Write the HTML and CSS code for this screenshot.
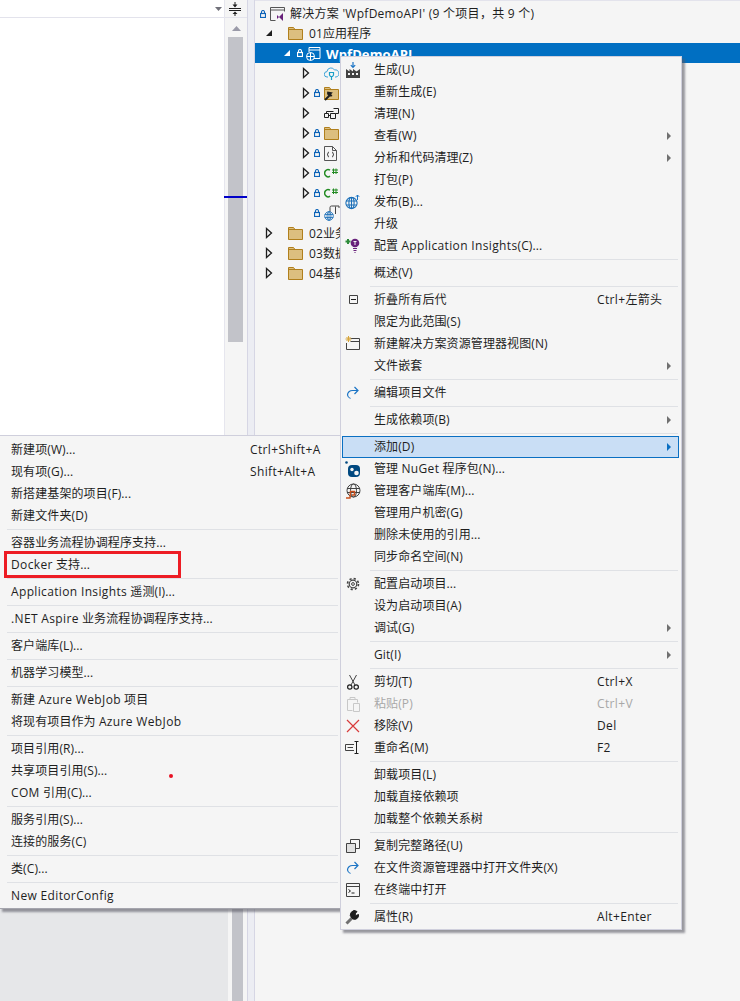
FILE: index.html
```html
<!DOCTYPE html>
<html lang="zh-CN">
<head>
<meta charset="utf-8">
<title>WpfDemoAPI</title>
<link rel="stylesheet" href="styles.css">
</head>
<body>
<svg class="defs" width="0" height="0" aria-hidden="true">
  <symbol id="lock" viewBox="0 0 6 8"><path d="M1.500 3.500V2a1.500 1.500 0 0 1 3 0v1.500" fill="none" stroke="currentColor" stroke-width="1.100"/><rect x=".5" y="3.500" width="5" height="4" fill="none" stroke="currentColor" stroke-width="1.200"/></symbol>
  <symbol id="open" viewBox="0 0 8 12"><path d="M1.500 1.500 6.500 6l-5 4.500z" fill="none" stroke="#1e1e1e" stroke-width="1.300"/></symbol>
  <symbol id="down" viewBox="0 0 8 8"><path d="M7 1v6H1z" fill="#1e1e1e"/></symbol>
  <symbol id="folder" viewBox="0 0 15 13"><path d="M.5 12.500V.5h5l1.500 2h7.500v10z" fill="#dcbf7f" stroke="#b07f1c"/><path d="M.5 2.500H7" fill="none" stroke="#b07f1c"/></symbol>
  <symbol id="globe" viewBox="0 0 12 12"><g fill="none" stroke="#1b6fb8" stroke-width="1"><circle cx="6" cy="6" r="5.200"/><ellipse cx="6" cy="6" rx="2.400" ry="5.200"/><path d="M1 4.200h10M1 7.800h10M6 .8v10.400"/></g></symbol>
  <symbol id="cs" viewBox="0 0 14 10"><path d="M6 2.200A3.400 3.600 0 1 0 6 8.200" fill="none" stroke="#228b22" stroke-width="1.500"/><path d="M9.500 .5V6M12 .5V6M8 2h6M8 4.500h6" fill="none" stroke="#228b22" stroke-width="1"/></symbol>
  <symbol id="redo" viewBox="0 0 16 16"><path d="M12.500 5.500H7.500a5 4.500 0 0 0-5 4.500 4.500 4.500 0 0 0 3 3.500" fill="none" stroke="#1b74c5" stroke-width="1.200"/><path d="M9.500 2l3.500 3.500L9.500 9" fill="none" stroke="#1b74c5" stroke-width="1.200"/></symbol>
</svg>

<div class="workspace">
  <section class="editor">
    <div class="editor-top"><svg class="dropdown" width="7" height="4" viewBox="0 0 7 4"><path d="M0 0h7L3.500 4z" fill="#71717a"/></svg></div>
    <div class="editor-body"></div>
    <div class="editor-empty"></div>
  </section>

  <div class="scroll">
    <div class="splitter"><svg width="12" height="14" viewBox="0 0 12 14"><path d="M0 6.500h12M0 8.500h12" stroke="#1e1e1e" fill="none"/><path d="M6 0v3M6 11v3" stroke="#1e1e1e" fill="none"/><path d="M3.500 2.500h5L6 5.500zM3.500 12h5L6 9.500z" fill="#1e1e1e"/></svg></div>
    <div class="scroll-up"><svg width="9" height="5" viewBox="0 0 9 5"><path d="M0 5h9L4.500 0z" fill="#9a9aa8"/></svg></div>
    <div class="thumb"></div>
    <div class="scroll-rest"></div>
    <div class="scroll-lower"><div class="thumb-lower"></div></div>
    <div class="marker"></div>
  </div>

  <div class="gutter"></div>

  <section class="tree">
    <div class="node l0"><svg class="lock"><use href="#lock"/></svg><svg class="sol" width="16" height="16" viewBox="0 0 16 16"><path d="M.5 14.500V1.500h14v4M.5 4h14M.5 14.500h5" fill="none" stroke="#555"/><path d="M7 9l2 2 4-4v8l-4-4-2 2z" fill="#68217a"/></svg><span class="gap wide">解决方案 'WpfDemoAPI' (9 个项目，共 9 个)</span></div>
    <div class="node l1"><svg class="tw"><use href="#down"/></svg><svg class="fold"><use href="#folder"/></svg><span class="gap">01应用程序</span></div>
    <div class="node l2 sel"><svg class="tw"><use href="#down"/></svg><svg class="lock"><use href="#lock"/></svg><svg class="web" width="15" height="15" viewBox="0 0 15 15"><path d="M3 1.500h11v11H8M3 4h11M3 1.500V6" fill="none" stroke="#fff"/><circle cx="4.500" cy="10.500" r="4" fill="none" stroke="#fff"/><path d="M.5 10.500h8M4.500 6.500v8" stroke="#fff"/></svg><b class="gap">WpfDemoAPI</b></div>
    <div class="node l3"><svg class="chev"><use href="#open"/></svg><span class="nolock"></span><svg width="15" height="14" viewBox="0 0 15 14"><path d="M4 11H3a2.700 2.700 0 0 1 0-5.400A4 4 0 0 1 10.500 4 3.400 3.400 0 0 1 12 11h-1" fill="none" stroke="#3da4d8"/><path d="M5.500 6.500h4V9l-1 1.500H6.500L5.500 9zM7.500 10.500V14" fill="none" stroke="#1ba0c8" stroke-width="1.200"/></svg></div>
    <div class="node l3"><svg class="chev"><use href="#open"/></svg><svg class="lock"><use href="#lock"/></svg><svg width="15" height="15" viewBox="0 0 15 15"><use href="#folder" width="15" height="13" y="1"/><path d="M1 14l5-5M4 6.500a2.500 2.500 0 0 0 3 3L6 8l1-1z" stroke="#1e1e1e" stroke-width="1.800" fill="#1e1e1e"/></svg></div>
    <div class="node l3"><svg class="chev"><use href="#open"/></svg><span class="nolock"></span><svg width="15" height="13" viewBox="0 0 15 13"><path d="M.5 6.500h4v4h-4zM6.500 6.500h5v5h-5zM9.500 1.500h5v5h-3M4.500 8.500h2M2.500 6.500v-2h7" fill="none" stroke="#222"/></svg></div>
    <div class="node l3"><svg class="chev"><use href="#open"/></svg><svg class="lock"><use href="#lock"/></svg><svg class="fold"><use href="#folder"/></svg></div>
    <div class="node l3"><svg class="chev"><use href="#open"/></svg><svg class="lock"><use href="#lock"/></svg><svg width="13" height="15" viewBox="0 0 13 15"><path d="M.5.500h8l4 4v10H.5z" fill="#f5f5f5" stroke="#555"/><path d="M8.500.5v4h4" fill="none" stroke="#555"/><path d="M5 6c-1.500 0-.5 2.500-2 2.500 1.500 0 .5 2.500 2 2.500M8 6c1.500 0 .5 2.500 2 2.500-1.500 0-.5 2.500-2 2.500" fill="none" stroke="#333"/></svg></div>
    <div class="node l3"><svg class="chev"><use href="#open"/></svg><svg class="lock"><use href="#lock"/></svg><svg class="csharp"><use href="#cs"/></svg></div>
    <div class="node l3"><svg class="chev"><use href="#open"/></svg><svg class="lock"><use href="#lock"/></svg><svg class="csharp"><use href="#cs"/></svg></div>
    <div class="node l3"><span class="nochev"></span><svg class="lock"><use href="#lock"/></svg><svg width="16" height="16" viewBox="0 0 16 16"><path d="M6 7V2.500A1.500 1.500 0 0 1 7.500 1H15v2M11.500 1.500V9" fill="none" stroke="#444"/><use href="#globe" width="10" height="10" y="6"/></svg></div>
    <div class="node l1"><svg class="chev"><use href="#open"/></svg><svg class="fold"><use href="#folder"/></svg><span class="gap">02业务层</span></div>
    <div class="node l1"><svg class="chev"><use href="#open"/></svg><svg class="fold"><use href="#folder"/></svg><span class="gap">03数据层</span></div>
    <div class="node l1"><svg class="chev"><use href="#open"/></svg><svg class="fold"><use href="#folder"/></svg><span class="gap">04基础层</span></div>
  </section>
</div>

<nav class="menu menu-add">
  <div class="row"><span class="label">新建项(W)...</span><span class="keys">Ctrl+Shift+A</span></div>
  <div class="row"><span class="label">现有项(G)...</span><span class="keys">Shift+Alt+A</span></div>
  <div class="row"><span class="label">新搭建基架的项目(F)...</span></div>
  <div class="row"><span class="label">新建文件夹(D)</span></div>
  <hr>
  <div class="row"><span class="label">容器业务流程协调程序支持...</span></div>
  <div class="row boxed"><span class="label"><span class="en">Docker</span> 支持...</span></div>
  <hr>
  <div class="row"><span class="label"><span class="en">Application Insights</span> 遥测(I)...</span></div>
  <hr>
  <div class="row"><span class="label"><span class="en">.NET Aspire</span> 业务流程协调程序支持...</span></div>
  <hr>
  <div class="row"><span class="label">客户端库(L)...</span></div>
  <hr>
  <div class="row"><span class="label">机器学习模型...</span></div>
  <hr>
  <div class="row"><span class="label">新建 <span class="en">Azure WebJob</span> 项目</span></div>
  <div class="row"><span class="label">将现有项目作为 <span class="en">Azure WebJob</span></span></div>
  <hr>
  <div class="row"><span class="label">项目引用(R)...</span></div>
  <div class="row"><span class="label">共享项目引用(S)...</span><i class="dot"></i></div>
  <div class="row"><span class="label"><span class="en">COM</span> 引用(C)...</span></div>
  <hr>
  <div class="row"><span class="label">服务引用(S)...</span></div>
  <div class="row"><span class="label">连接的服务(C)</span></div>
  <hr>
  <div class="row"><span class="label">类(C)...</span></div>
  <hr>
  <div class="row"><span class="label"><span class="en">New EditorConfig</span></span></div>
</nav>

<nav class="menu menu-project">
  <div class="row"><span class="ico"><svg width="16" height="16" viewBox="0 0 16 16"><path d="M1 16V7l3.500 2.500V7L8 9.500V7l3.500 2.500L15 7v9z" fill="#424242"/><path d="M3 11h2v2H3zM7 11h2v2H7zM11 11h2v2h-2z" fill="#f5f5f5"/><path d="M8 0v5M5.800 3.200 8 5.500l2.200-2.300" fill="none" stroke="#1b74c5" stroke-width="1.200"/></svg></span><span class="label">生成(U)</span></div>
  <div class="row"><span class="ico"></span><span class="label">重新生成(E)</span></div>
  <div class="row"><span class="ico"></span><span class="label">清理(N)</span></div>
  <div class="row"><span class="ico"></span><span class="label">查看(W)</span><span class="keys"><i class="more"></i></span></div>
  <div class="row"><span class="ico"></span><span class="label">分析和代码清理(Z)</span><span class="keys"><i class="more"></i></span></div>
  <div class="row"><span class="ico"></span><span class="label">打包(P)</span></div>
  <div class="row"><span class="ico"><svg width="16" height="16" viewBox="0 0 16 16"><use href="#globe" width="13" height="13" y="2.500"/><path d="M12.500 6V1M10.800 2.800 12.500 1l1.700 1.800" fill="none" stroke="#1b74c5"/></svg></span><span class="label">发布(B)...</span></div>
  <div class="row"><span class="ico"></span><span class="label">升级</span></div>
  <div class="row"><span class="ico"><svg width="16" height="16" viewBox="0 0 16 16"><path d="M3 1v5M.5 3.500h5" stroke="#2e8b3a" stroke-width="2" fill="none"/><circle cx="10" cy="5" r="4.300" fill="#68217a"/><path d="M8.500 3.500h3M10 3.500v3.500" stroke="#f5f5f5" fill="none"/><path d="M8 10.500h4M8.500 12.500h3M9.500 14.500h1" stroke="#68217a" stroke-width="1.200" fill="none"/></svg></span><span class="label">配置 <span class="en">Application Insights</span>(C)...</span></div>
  <hr>
  <div class="row"><span class="ico"></span><span class="label">概述(V)</span></div>
  <hr>
  <div class="row"><span class="ico"><svg width="16" height="16" viewBox="0 0 16 16"><path d="M4.500 3.500h8v8h-8z" fill="none" stroke="#424242"/><path d="M6 7.500h5" stroke="#1e1e1e"/></svg></span><span class="label">折叠所有后代</span><span class="keys">Ctrl+左箭头</span></div>
  <div class="row"><span class="ico"></span><span class="label">限定为此范围(S)</span></div>
  <div class="row"><span class="ico"><svg width="16" height="16" viewBox="0 0 16 16"><path d="M5.500 2.500h9v11h-13V7M5.500 5.500h9" fill="none" stroke="#424242"/><path d="M3.500 0v6M.5 3h6M1.500 1l4 4M5.500 1l-4 4" stroke="#d7a53a" fill="none"/></svg></span><span class="label">新建解决方案资源管理器视图(N)</span></div>
  <div class="row"><span class="ico"></span><span class="label">文件嵌套</span><span class="keys"><i class="more"></i></span></div>
  <hr>
  <div class="row"><span class="ico"><svg width="16" height="16"><use href="#redo"/></svg></span><span class="label">编辑项目文件</span></div>
  <hr>
  <div class="row"><span class="ico"></span><span class="label">生成依赖项(B)</span><span class="keys"><i class="more"></i></span></div>
  <hr>
  <div class="row active"><span class="ico"></span><span class="label">添加(D)</span><span class="keys"><i class="more"></i></span></div>
  <div class="row"><span class="ico"><svg width="16" height="16" viewBox="0 0 16 16"><rect x="3" y="4" width="12" height="12" rx="4" fill="#004880"/><circle cx="1.500" cy="1.500" r="1.300" fill="#004880"/><circle cx="7" cy="8.500" r="1.700" fill="#f5f5f5"/><circle cx="11.500" cy="12" r="2.300" fill="#f5f5f5"/></svg></span><span class="label">管理 <span class="en">NuGet</span> 程序包(N)...</span></div>
  <div class="row"><span class="ico"><svg width="16" height="16" viewBox="0 0 16 16"><g fill="none" stroke="#424242"><circle cx="8.500" cy="7.500" r="6.500"/><ellipse cx="8.500" cy="7.500" rx="3" ry="6.500"/><path d="M2 5.500h13M2 9.500h13"/></g><path d="M1 15h4l.5-6.500h4V12H7" fill="none" stroke="#c8501e" stroke-width="1.500"/></svg></span><span class="label">管理客户端库(M)...</span></div>
  <div class="row"><span class="ico"></span><span class="label">管理用户机密(G)</span></div>
  <div class="row"><span class="ico"></span><span class="label">删除未使用的引用...</span></div>
  <div class="row"><span class="ico"></span><span class="label">同步命名空间(N)</span></div>
  <hr>
  <div class="row"><span class="ico"><svg width="16" height="16" viewBox="0 0 16 16"><circle cx="8" cy="8" r="3.800" fill="none" stroke="#424242" stroke-width="1.200"/><circle cx="8" cy="8" r="5.500" fill="none" stroke="#424242" stroke-width="1.600" stroke-dasharray="2.200 2.120"/><circle cx="8" cy="8" r="1.400" fill="none" stroke="#424242"/></svg></span><span class="label">配置启动项目...</span></div>
  <div class="row"><span class="ico"></span><span class="label">设为启动项目(A)</span></div>
  <div class="row"><span class="ico"></span><span class="label">调试(G)</span><span class="keys"><i class="more"></i></span></div>
  <hr>
  <div class="row"><span class="ico"></span><span class="label">Git(I)</span><span class="keys"><i class="more"></i></span></div>
  <hr>
  <div class="row"><span class="ico"><svg width="16" height="16" viewBox="0 0 16 16"><path d="M4.500 1 10 11M11.500 1 6 11" stroke="#424242" fill="none"/><circle cx="4.800" cy="13" r="2.200" fill="none" stroke="#1e1e1e" stroke-width="1.200"/><circle cx="11.200" cy="13" r="2.200" fill="none" stroke="#1e1e1e" stroke-width="1.200"/></svg></span><span class="label">剪切(T)</span><span class="keys">Ctrl+X</span></div>
  <div class="row off"><span class="ico"><svg width="16" height="16" viewBox="0 0 16 16"><path d="M7.500 14.500h-5v-11h10v3M5 3.500V1.500h5v2" fill="none" stroke="#c8c8c8"/><path d="M8.500 7.500h6v8h-6z" fill="none" stroke="#c8c8c8"/></svg></span><span class="label">粘贴(P)</span><span class="keys">Ctrl+V</span></div>
  <div class="row"><span class="ico"><svg width="16" height="16" viewBox="0 0 16 16"><path d="M2 2l12 12M14 2 2 14" stroke="#d83b3b" stroke-width="1.200" fill="none"/></svg></span><span class="label">移除(V)</span><span class="keys">Del</span></div>
  <div class="row"><span class="ico"><svg width="16" height="16" viewBox="0 0 16 16"><path d="M9 4.500H.5v6H9" fill="none" stroke="#424242"/><path d="M2.500 7.500H8" stroke="#424242"/><path d="M9.500 1.500h4M9.500 13.500h4M11.500 1.500v12" stroke="#1e1e1e" fill="none"/></svg></span><span class="label">重命名(M)</span><span class="keys">F2</span></div>
  <hr>
  <div class="row"><span class="ico"></span><span class="label">卸载项目(L)</span></div>
  <div class="row"><span class="ico"></span><span class="label">加载直接依赖项</span></div>
  <div class="row"><span class="ico"></span><span class="label">加载整个依赖关系树</span></div>
  <hr>
  <div class="row"><span class="ico"><svg width="16" height="16" viewBox="0 0 16 16"><path d="M1.500 5.500h9v9h-9z" fill="#e0e0e0" stroke="#424242"/><path d="M5.500 5V1.500h9v9H11" fill="none" stroke="#424242"/></svg></span><span class="label">复制完整路径(U)</span></div>
  <div class="row"><span class="ico"><svg width="16" height="16"><use href="#redo"/></svg></span><span class="label">在文件资源管理器中打开文件夹(X)</span></div>
  <div class="row"><span class="ico"><svg width="16" height="16" viewBox="0 0 16 16"><path d="M1.500 1.500h13v13h-13zM1.500 4.500h13" fill="none" stroke="#424242"/><path d="M3.500 7.500l2 1.500-2 1.500M6.500 11h3" fill="none" stroke="#1e1e1e"/></svg></span><span class="label">在终端中打开</span></div>
  <hr>
  <div class="row"><span class="ico"><svg width="16" height="16" viewBox="0 0 16 16"><path d="M1.500 14.500 8 8" stroke="#707070" stroke-width="3" fill="none"/><path d="M7 9A4 4 0 0 1 12 2.500L10 5l1 1.500 2.500-1A4 4 0 0 1 8 10z" fill="#1e1e1e" stroke="#1e1e1e"/></svg></span><span class="label">属性(R)</span><span class="keys">Alt+Enter</span></div>
</nav>
</body>
</html>
```
FILE: styles.css
```css
*, *::after { box-sizing: border-box; }
html, body { margin: 0; padding: 0; height: 100%; overflow: hidden; }
body {
  position: relative;
  width: 740px;
  height: 1001px;
  background: #f5f5f5;
  color: #1e1e1e;
  font: 12px/22px "Open Sans", "Noto Sans CJK SC", sans-serif;
  letter-spacing: .1px;
}
svg { display: block; flex: none; }
.defs { position: absolute; }

.workspace { display: flex; height: 1001px; }

.editor { width: 224px; display: flex; flex-direction: column; }
.editor-top {
  height: 18px;
  background: #fff;
  border-bottom: 1px solid #e3e3ec;
  display: flex;
  align-items: center;
  justify-content: flex-end;
  padding-right: 2px;
}
.editor-body { height: 417px; background: #fff; }
.editor-empty { flex: 1; background: #e6e7e9; }

.scroll { position: relative; width: 23px; display: flex; flex-direction: column; border-left: 1px solid #e6e6ee; }
.splitter { height: 18px; flex: none; display: flex; justify-content: center; align-items: center; padding-right: 2px; border-bottom: 1px solid #e3e3ec; }
.scroll-up { height: 19px; flex: none; padding: 8px 0 0 7px; }
.thumb { height: 305px; flex: none; width: 15px; margin-left: 3px; background: #c2c3c9; }
.scroll-rest { flex: 1; }
.scroll-lower { height: 100px; flex: none; width: 18px; margin-left: -1px; border-left: 4px solid #e6e7e9; padding-left: 4px; }
.thumb-lower { width: 11px; height: 100%; background: #c2c3c9; }
.marker { position: absolute; left: -1px; right: 0; top: 196px; height: 2px; background: #0000c8; }

.gutter { width: 8px; background: #ecedf3; border-left: 1px solid #d6d6e4; border-right: 1px solid #d6d6e4; }

.tree { flex: 1; padding-top: 2px; border-top: 1px solid #e3e3ec; line-height: 20px; }
.node { height: 20px; display: flex; align-items: center; white-space: nowrap; }
.node.l0 { padding: 2px 0 0 5px; }
.node.l1 { padding-left: 10px; }
.node.l2 { padding-left: 28px; }
.node.l3 { padding-left: 47px; }
.node.sel { background: #006fc2; color: #fff; }
.node b { font-weight: 700; font-size: 13px; }
.gap { margin: 2px 0 0 6px; }
.l0 .gap { margin: 0 0 0 4px; }
.sel .gap { margin-left: 5px; }
.wide { letter-spacing: .27px; }
.lock { width: 6px; height: 8px; color: #0e64b8; margin-right: 4px; }
.sel .lock { color: #fff; margin-right: 3px; }
.tw { width: 8px; height: 8px; }
.l1 .tw, .l1 .chev { margin-right: 15px; }
.sel .tw { margin-right: 6px; filter: invert(1) brightness(2); }
.chev { width: 8px; height: 12px; margin-right: 4px; }
.nolock { width: 10px; flex: none; }
.nochev { width: 12px; flex: none; }
.fold { width: 15px; height: 13px; }
.csharp { width: 14px; height: 10px; }

.menu {
  position: absolute;
  background: #f5f5f5;
  border: 1px solid #cfcfdc;
  box-shadow: 3px 3px 2px rgba(90, 90, 100, .6);
}
.menu-add { left: -1px; top: 435px; width: 343px; height: 474px; padding: 3px 0 0 1px; border-right-color: #a5a5ad; border-bottom-color: #a5a5ad; }
.menu-project { left: 340px; top: 56px; width: 342px; height: 874px; padding: 2px 2px 0 1px; }

.row { position: relative; height: 22px; display: flex; align-items: center; white-space: nowrap; }
.menu-add .row { padding-left: 10px; }
.label { flex: 1; }
.en { letter-spacing: .35px; }
.keys { width: 82px; flex: none; display: flex; align-items: center; letter-spacing: .35px; }
.menu-add .keys { width: 91px; }
.ico { width: 16px; height: 16px; margin: 0 13px 0 3px; flex: none; }
.off { color: #a8a8a8; }
.more { display: block; width: 0; height: 0; margin-left: 70px; border-left: 4px solid #707070; border-top: 4px solid transparent; border-bottom: 4px solid transparent; }
.active { background: #c9def5; box-shadow: inset 0 0 0 1px #0a6fc2; }
.active .more { border-left-color: #0a6fc2; }

hr { height: 1px; margin: 2px 1px 2px 28px; border: 0; background: #dfe1e5; }
.menu-add hr { margin: 2px 3px 2px 6px; }

.boxed::after {
  content: "";
  position: absolute;
  left: 3px;
  top: -3px;
  width: 177px;
  height: 27px;
  border: 3px solid #ed1c24;
}
.dot { position: absolute; left: 168px; top: 14px; width: 4px; height: 4px; border-radius: 50%; background: #e81123; }
```
